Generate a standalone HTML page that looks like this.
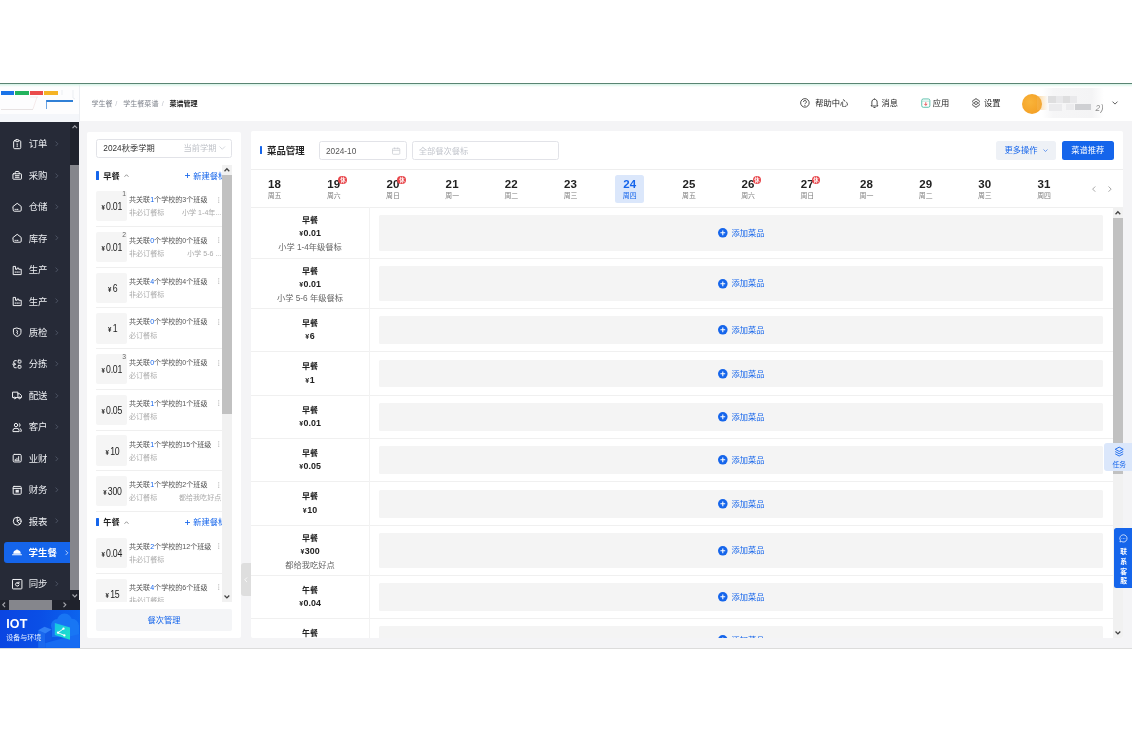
<!DOCTYPE html>
<html lang="zh-CN"><head><meta charset="utf-8"><title>菜谱管理</title>
<style>
*{box-sizing:border-box;margin:0;padding:0}
html,body{width:1132px;height:732px;overflow:hidden;background:#fff}
body{font-family:"Liberation Sans","Noto Sans CJK SC",sans-serif;color:#333;-webkit-font-smoothing:antialiased}
#app{position:relative;width:1132px;height:732px;overflow:hidden;background:#fff;opacity:.999}
#app div{position:absolute}
svg{position:absolute;overflow:visible}
.b{font-weight:700}
</style></head><body><div id="app">

<div style="position:absolute;left:0.00px;top:84.00px;width:1132.00px;height:37.20px;background:#fff;"></div>
<div style="position:absolute;left:0.00px;top:121.20px;width:1132.00px;height:526.80px;background:#f4f4f6;"></div>
<div style="position:absolute;left:0.00px;top:647.60px;width:1132.00px;height:1.00px;background:#dcdcdc;"></div>
<div style="position:absolute;left:0.00px;top:84.00px;width:79.60px;height:37.80px;background:#f4f6fa;border-right:1px solid #eceef2;"></div>
<div style="position:absolute;left:0.00px;top:85.00px;width:79.00px;height:28.50px;background:#fdfdfe;"></div>
<div style="position:absolute;left:1.20px;top:91.30px;width:12.90px;height:4.10px;background:#1a73e8;"></div>
<div style="position:absolute;left:15.00px;top:91.30px;width:14.10px;height:4.10px;background:#22b35e;"></div>
<div style="position:absolute;left:30.10px;top:91.30px;width:13.00px;height:4.10px;background:#ea4b4b;"></div>
<div style="position:absolute;left:44.00px;top:91.30px;width:14.00px;height:4.10px;background:#f5b324;"></div>
<div style="position:absolute;left:46.00px;top:100.00px;width:26.60px;height:1.70px;background:#2f7fd6;"></div>
<div style="position:absolute;left:46.00px;top:100.00px;width:1.00px;height:8.50px;background:#4a8fdc;opacity:.8;"></div>
<div style="position:absolute;left:1.00px;top:108.60px;width:32.00px;height:0.60px;background:#e7e2e2;"></div>
<svg style="left:0;top:84px" width="80" height="38"><path d="M33 25 L37 13 M30 13 L38 13" stroke="#efdede" stroke-width=".6" fill="none"/><path d="M62 6v5M73 6v8l2 1" stroke="#e3e6ee" stroke-width=".7" fill="none"/></svg>
<div style="position:absolute;left:0.00px;top:84.00px;width:1132.00px;height:2.60px;background:linear-gradient(180deg,#d4f3e6,rgba(255,255,255,0));"></div>
<div style="position:absolute;left:0.00px;top:82.90px;width:1132.00px;height:1.20px;background:#5a8473;"></div>
<div style="position:absolute;white-space:nowrap;top:96px;height:16px;line-height:16px;font-size:7.07px;color:#7f838c;left:91.40px;">学生餐</div>
<div style="position:absolute;white-space:nowrap;top:96px;height:16px;line-height:16px;font-size:7.07px;color:#c0c4cc;left:115.30px;">/</div>
<div style="position:absolute;white-space:nowrap;top:96px;height:16px;line-height:16px;font-size:7.07px;color:#7f838c;left:123.20px;">学生餐菜谱</div>
<div style="position:absolute;white-space:nowrap;top:96px;height:16px;line-height:16px;font-size:7.07px;color:#c0c4cc;left:161.80px;">/</div>
<div style="position:absolute;white-space:nowrap;top:96px;height:16px;line-height:16px;font-size:7.07px;color:#222;font-weight:700;left:169.40px;">菜谱管理</div>
<svg style="left:800.4px;top:98.3px" width="9.800" height="9.800" viewBox="0 0 20 20"><circle cx="10" cy="10" r="8.700" fill="none" stroke="#2b2b2b" stroke-width="1.700"/><path d="M7.200 8a2.900 2.900 0 1 1 4.300 2.500c-.9.600-1.400 1-1.400 2.100" fill="none" stroke="#2b2b2b" stroke-width="1.700"/><circle cx="10" cy="15.200" r="1.100" fill="#2b2b2b"/></svg>
<div style="position:absolute;white-space:nowrap;top:96px;height:16px;line-height:16px;font-size:8.25px;color:#222;left:815.20px;">帮助中心</div>
<svg style="left:870.0px;top:97.8px" width="9" height="10.800" viewBox="0 0 18 21.600"><path d="M9 2.600c-3.400 0-5.300 2.500-5.300 5.700v5L2 16h14l-1.700-2.700v-5C14.300 5.100 12.400 2.600 9 2.600z" fill="none" stroke="#2b2b2b" stroke-width="1.700" stroke-linejoin="round"/><path d="M7 19h4M9 1v1.600" stroke="#2b2b2b" stroke-width="1.700"/></svg>
<div style="position:absolute;white-space:nowrap;top:96px;height:16px;line-height:16px;font-size:8.25px;color:#222;left:881.50px;">消息</div>
<svg style="left:920.6px;top:98.2px" width="9.600" height="10" viewBox="0 0 20 21"><rect x="1.500" y="2" width="17" height="17.500" rx="3.200" fill="#fff" stroke="#3bb39b" stroke-width="1.700"/><path d="M1.500 6.600h17" stroke="#8fd6c6" stroke-width="1.400"/><path d="M10 8.800v6.400M6.900 12.400l3.100 3.100 3.100-3.100" stroke="#e5484d" stroke-width="1.900" fill="none"/></svg>
<div style="position:absolute;white-space:nowrap;top:96px;height:16px;line-height:16px;font-size:8.25px;color:#222;left:932.70px;">应用</div>
<svg style="left:971px;top:98.2px" width="10" height="10" viewBox="0 0 20 20"><path d="M8.400 1.700h3.200l1.200 2.300 2.500.100 1.600 2.800-1.300 2.100v2l1.300 2.100-1.600 2.800-2.500.100-1.200 2.300H8.400l-1.200-2.300-2.500-.100-1.600-2.800L4.400 11V9L3.100 6.900l1.600-2.800 2.500-.100z" fill="none" stroke="#2b2b2b" stroke-width="1.500" stroke-linejoin="round"/><circle cx="10" cy="10" r="3" fill="none" stroke="#2b2b2b" stroke-width="1.500"/></svg>
<div style="position:absolute;white-space:nowrap;top:96px;height:16px;line-height:16px;font-size:8.25px;color:#222;left:984.00px;">设置</div>
<div style="position:absolute;left:1021.50px;top:93.50px;width:20.00px;height:20.00px;background:radial-gradient(circle at 40% 40%,#f9b43a,#f29a1f);border-radius:50%;"></div>
<div style="position:absolute;left:1041.50px;top:88.00px;width:62.50px;height:30.00px;background:linear-gradient(90deg,rgba(255,255,255,0) 0,#f6f6f7 18%,#f4f4f5 80%,rgba(255,255,255,.6) 100%);"></div>
<div style="position:absolute;left:1037.00px;top:96.00px;width:11.00px;height:14.00px;background:linear-gradient(90deg,rgba(244,180,80,.55),rgba(246,246,247,0));"></div>
<div style="position:absolute;left:1048.40px;top:96.20px;width:7.60px;height:7.00px;background:#dededf;filter:blur(.6px);"></div>
<div style="position:absolute;left:1063.00px;top:96.20px;width:7.00px;height:7.00px;background:#dededf;filter:blur(.6px);"></div>
<div style="position:absolute;left:1056.00px;top:96.20px;width:7.00px;height:7.00px;background:#e8e8ea;filter:blur(.6px);"></div>
<div style="position:absolute;left:1070.00px;top:96.20px;width:7.00px;height:7.00px;background:#e9e9eb;filter:blur(.6px);"></div>
<div style="position:absolute;left:1066.00px;top:104.00px;width:8.00px;height:6.00px;background:#ececee;filter:blur(.6px);"></div>
<div style="position:absolute;left:1075.00px;top:104.40px;width:16.00px;height:5.80px;background:#cfd0d3;filter:blur(.6px);"></div>
<div style="position:absolute;left:1049.00px;top:104.00px;width:13.00px;height:7.00px;background:#ebebed;filter:blur(.6px);"></div>
<div style="position:absolute;white-space:nowrap;top:101px;height:16px;line-height:16px;font-size:8.25px;color:#8c8c8c;left:1095.60px;letter-spacing:.6px;font-style:italic;">2)</div>
<svg style="left:1112.2px;top:101.4px" width="6" height="4" viewBox="0 0 12 8"><path d="M1 1.200l5 5 5-5" fill="none" stroke="#444" stroke-width="1.700"/></svg>
<div style="position:absolute;left:0.00px;top:121.90px;width:79.40px;height:526.10px;background:#262a37;"></div>
<svg style="left:12px;top:138.90px" width="10.400" height="10.400" viewBox="0 0 22 22" fill="none" stroke="#f4f5f7" stroke-width="2.100" stroke-linejoin="round" stroke-linecap="round"><rect x="3.500" y="3.500" width="15" height="17" rx="2.200"/><rect x="7.800" y="1.500" width="6.400" height="4" rx="1" fill="#262a37"/><path d="M11 10v3.200"/><path d="M11 15.600v.4"/></svg>
<div style="position:absolute;white-space:nowrap;top:136px;height:16px;line-height:16px;font-size:9.43px;color:#eceef2;left:28.70px;">订单</div>
<svg style="left:55.3px;top:141.20px" width="3.500" height="5.600" viewBox="0 0 7 11"><path d="M1.200 1l4.500 4.500L1.200 10" fill="none" stroke="#5a6072" stroke-width="1.500"/></svg>
<svg style="left:12px;top:170.33px" width="10.400" height="10.400" viewBox="0 0 22 22" fill="none" stroke="#f4f5f7" stroke-width="2.100" stroke-linejoin="round" stroke-linecap="round"><rect x="2" y="8" width="18" height="11.500" rx="1"/><path d="M6.800 8V5a1.800 1.800 0 0 1 1.800-1.800h4.800A1.800 1.800 0 0 1 15.200 5v3"/><path d="M7 12h8M7 15.500h8"/></svg>
<div style="position:absolute;white-space:nowrap;top:168px;height:16px;line-height:16px;font-size:9.43px;color:#eceef2;left:28.70px;">采购</div>
<svg style="left:55.3px;top:172.63px" width="3.500" height="5.600" viewBox="0 0 7 11"><path d="M1.200 1l4.500 4.500L1.200 10" fill="none" stroke="#5a6072" stroke-width="1.500"/></svg>
<svg style="left:12px;top:201.76px" width="10.400" height="10.400" viewBox="0 0 22 22" fill="none" stroke="#f4f5f7" stroke-width="2.100" stroke-linejoin="round" stroke-linecap="round"><path d="M2.500 9.300L11 2.800l8.500 6.500v8a2.200 2.200 0 0 1-2.200 2.200H4.700a2.200 2.200 0 0 1-2.200-2.200z"/><path d="M6.300 15.600h1M10 15.600h2.600"/></svg>
<div style="position:absolute;white-space:nowrap;top:199px;height:16px;line-height:16px;font-size:9.43px;color:#eceef2;left:28.70px;">仓储</div>
<svg style="left:55.3px;top:204.06px" width="3.500" height="5.600" viewBox="0 0 7 11"><path d="M1.200 1l4.500 4.500L1.200 10" fill="none" stroke="#5a6072" stroke-width="1.500"/></svg>
<svg style="left:12px;top:233.19px" width="10.400" height="10.400" viewBox="0 0 22 22" fill="none" stroke="#f4f5f7" stroke-width="2.100" stroke-linejoin="round" stroke-linecap="round"><path d="M2.500 9.300L11 2.800l8.500 6.500v8a2.200 2.200 0 0 1-2.200 2.200H4.700a2.200 2.200 0 0 1-2.200-2.200z"/><path d="M6.300 15.600h1M10 15.600h2.600"/></svg>
<div style="position:absolute;white-space:nowrap;top:231px;height:16px;line-height:16px;font-size:9.43px;color:#eceef2;left:28.70px;">库存</div>
<svg style="left:55.3px;top:235.49px" width="3.500" height="5.600" viewBox="0 0 7 11"><path d="M1.200 1l4.500 4.500L1.200 10" fill="none" stroke="#5a6072" stroke-width="1.500"/></svg>
<svg style="left:12px;top:264.62px" width="10.400" height="10.400" viewBox="0 0 22 22" fill="none" stroke="#f4f5f7" stroke-width="2.100" stroke-linejoin="round" stroke-linecap="round"><path d="M2.500 19.500V3h5v6h3.300V6.500h3.400V9h5.300v10.500z"/><path d="M6.500 15h1.600M10.300 15h1.600M14 15h1.600"/></svg>
<div style="position:absolute;white-space:nowrap;top:262px;height:16px;line-height:16px;font-size:9.43px;color:#eceef2;left:28.70px;">生产</div>
<svg style="left:55.3px;top:266.92px" width="3.500" height="5.600" viewBox="0 0 7 11"><path d="M1.200 1l4.500 4.500L1.200 10" fill="none" stroke="#5a6072" stroke-width="1.500"/></svg>
<svg style="left:12px;top:296.05px" width="10.400" height="10.400" viewBox="0 0 22 22" fill="none" stroke="#f4f5f7" stroke-width="2.100" stroke-linejoin="round" stroke-linecap="round"><path d="M2.500 19.500V3h5v6h3.300V6.500h3.400V9h5.300v10.500z"/><path d="M6.500 15h1.600M10.300 15h1.600M14 15h1.600"/></svg>
<div style="position:absolute;white-space:nowrap;top:294px;height:16px;line-height:16px;font-size:9.43px;color:#eceef2;left:28.70px;">生产</div>
<svg style="left:55.3px;top:298.35px" width="3.500" height="5.600" viewBox="0 0 7 11"><path d="M1.200 1l4.500 4.500L1.200 10" fill="none" stroke="#5a6072" stroke-width="1.500"/></svg>
<svg style="left:12px;top:327.48px" width="10.400" height="10.400" viewBox="0 0 22 22" fill="none" stroke="#f4f5f7" stroke-width="2.100" stroke-linejoin="round" stroke-linecap="round"><path d="M11 2.300l8 2.500v6.400c0 4.600-3.600 7.300-8 8.800-4.400-1.500-8-4.200-8-8.800V4.800z"/><path d="M9.800 7.200l2.800 2.100-2.800 2.100 2.800 2.100-1.600 1.400"/></svg>
<div style="position:absolute;white-space:nowrap;top:325px;height:16px;line-height:16px;font-size:9.43px;color:#eceef2;left:28.70px;">质检</div>
<svg style="left:55.3px;top:329.78px" width="3.500" height="5.600" viewBox="0 0 7 11"><path d="M1.200 1l4.500 4.500L1.200 10" fill="none" stroke="#5a6072" stroke-width="1.500"/></svg>
<svg style="left:12px;top:358.91px" width="10.400" height="10.400" viewBox="0 0 22 22" fill="none" stroke="#f4f5f7" stroke-width="2.100" stroke-linejoin="round" stroke-linecap="round"><path d="M9 3.500H6.200a2.400 2.400 0 0 0-2.400 2.400V9"/><path d="M9 18.500H6.200a2.400 2.400 0 0 1-2.400-2.400V13"/><path d="M1.500 11h5.500M5 8.700L7.300 11 5 13.300"/><rect x="13" y="2.500" width="6" height="6" rx="1.200"/><rect x="13" y="13.500" width="6" height="6" rx="1.200"/></svg>
<div style="position:absolute;white-space:nowrap;top:356px;height:16px;line-height:16px;font-size:9.43px;color:#eceef2;left:28.70px;">分拣</div>
<svg style="left:55.3px;top:361.21px" width="3.500" height="5.600" viewBox="0 0 7 11"><path d="M1.200 1l4.500 4.500L1.200 10" fill="none" stroke="#5a6072" stroke-width="1.500"/></svg>
<svg style="left:12px;top:390.34px" width="10.400" height="10.400" viewBox="0 0 22 22" fill="none" stroke="#f4f5f7" stroke-width="2.100" stroke-linejoin="round" stroke-linecap="round"><path d="M2 4.500h10.500v11.500H2z"/><path d="M12.500 8h4l3.500 3.800V16h-7.500"/><circle cx="6" cy="16.800" r="1.800" fill="#262a37"/><circle cx="15.800" cy="16.800" r="1.800" fill="#262a37"/></svg>
<div style="position:absolute;white-space:nowrap;top:388px;height:16px;line-height:16px;font-size:9.43px;color:#eceef2;left:28.70px;">配送</div>
<svg style="left:55.3px;top:392.64px" width="3.500" height="5.600" viewBox="0 0 7 11"><path d="M1.200 1l4.500 4.500L1.200 10" fill="none" stroke="#5a6072" stroke-width="1.500"/></svg>
<svg style="left:12px;top:421.77px" width="10.400" height="10.400" viewBox="0 0 22 22" fill="none" stroke="#f4f5f7" stroke-width="2.100" stroke-linejoin="round" stroke-linecap="round"><circle cx="8.500" cy="6.500" r="3.600"/><path d="M2 19.500V18a4.500 4.500 0 0 1 4.500-4.500h4A4.500 4.500 0 0 1 15 18v1.500z"/><path d="M15.300 3.300a3.600 3.600 0 0 1 0 6.400M18 19.500h2V18a4.500 4.500 0 0 0-2.800-4.100"/></svg>
<div style="position:absolute;white-space:nowrap;top:419px;height:16px;line-height:16px;font-size:9.43px;color:#eceef2;left:28.70px;">客户</div>
<svg style="left:55.3px;top:424.07px" width="3.500" height="5.600" viewBox="0 0 7 11"><path d="M1.200 1l4.500 4.500L1.200 10" fill="none" stroke="#5a6072" stroke-width="1.500"/></svg>
<svg style="left:12px;top:453.20px" width="10.400" height="10.400" viewBox="0 0 22 22" fill="none" stroke="#f4f5f7" stroke-width="2.100" stroke-linejoin="round" stroke-linecap="round"><rect x="2.500" y="3" width="17" height="16" rx="2.500"/><path d="M7 15.500v-2M10.500 15.500v-4.500M14 15.500V7.500" stroke-width="2"/><path d="M6 15.800h9.500" stroke-width="1.200"/></svg>
<div style="position:absolute;white-space:nowrap;top:451px;height:16px;line-height:16px;font-size:9.43px;color:#eceef2;left:28.70px;">业财</div>
<svg style="left:55.3px;top:455.50px" width="3.500" height="5.600" viewBox="0 0 7 11"><path d="M1.200 1l4.500 4.500L1.200 10" fill="none" stroke="#5a6072" stroke-width="1.500"/></svg>
<svg style="left:12px;top:484.63px" width="10.400" height="10.400" viewBox="0 0 22 22" fill="none" stroke="#f4f5f7" stroke-width="2.100" stroke-linejoin="round" stroke-linecap="round"><rect x="2.500" y="3" width="17" height="16.500" rx="1.800"/><path d="M2.500 7.200h17"/><rect x="7.500" y="10.200" width="7" height="5.800" fill="#e9eaee" stroke="none"/></svg>
<div style="position:absolute;white-space:nowrap;top:482px;height:16px;line-height:16px;font-size:9.43px;color:#eceef2;left:28.70px;">财务</div>
<svg style="left:55.3px;top:486.93px" width="3.500" height="5.600" viewBox="0 0 7 11"><path d="M1.200 1l4.500 4.500L1.200 10" fill="none" stroke="#5a6072" stroke-width="1.500"/></svg>
<svg style="left:12px;top:516.06px" width="10.400" height="10.400" viewBox="0 0 22 22" fill="none" stroke="#f4f5f7" stroke-width="2.100" stroke-linejoin="round" stroke-linecap="round"><circle cx="11" cy="11" r="8.300"/><path d="M11 2.700V11l5 5.500M11 11l6.500-3.800"/></svg>
<div style="position:absolute;white-space:nowrap;top:514px;height:16px;line-height:16px;font-size:9.43px;color:#eceef2;left:28.70px;">报表</div>
<svg style="left:55.3px;top:518.36px" width="3.500" height="5.600" viewBox="0 0 7 11"><path d="M1.200 1l4.500 4.500L1.200 10" fill="none" stroke="#5a6072" stroke-width="1.500"/></svg>
<div style="position:absolute;left:4.00px;top:542.39px;width:75.00px;height:20.40px;background:#1565eb;border-radius:3px 0 0 3px;"></div>
<svg style="left:12.2px;top:549.19px" width="10" height="6.500" viewBox="0 0 20 13"><path d="M2.500 9.300a7.500 7.500 0 0 1 15 0z" fill="#fff"/><circle cx="10" cy="1.600" r="1.300" fill="#fff"/><rect x="0" y="10.300" width="20" height="2.400" rx="1.200" fill="#fff"/></svg>
<div style="position:absolute;white-space:nowrap;top:545px;height:16px;line-height:16px;font-size:9.43px;color:#fff;font-weight:700;left:28.60px;">学生餐</div>
<svg style="left:64.6px;top:549.79px" width="3.500" height="5.600" viewBox="0 0 7 11"><path d="M1.200 1l4.500 4.500L1.200 10" fill="none" stroke="#e6efff" stroke-width="1.500"/></svg>
<svg style="left:12px;top:578.92px" width="10.400" height="10.400" viewBox="0 0 22 22" fill="none" stroke="#f4f5f7" stroke-width="2.100" stroke-linejoin="round" stroke-linecap="round"><rect x="1" y="1" width="20" height="20" rx="1.500"/><path d="M14.300 9a3.800 3.800 0 1 0 .6 3.600"/><path d="M14.800 6.300v3h-3"/></svg>
<div style="position:absolute;white-space:nowrap;top:576px;height:16px;line-height:16px;font-size:9.43px;color:#eceef2;left:28.70px;">同步</div>
<svg style="left:55.3px;top:581.22px" width="3.500" height="5.600" viewBox="0 0 7 11"><path d="M1.200 1l4.500 4.500L1.200 10" fill="none" stroke="#5a6072" stroke-width="1.500"/></svg>
<div style="position:absolute;left:69.60px;top:121.90px;width:9.80px;height:478.50px;background:#1f222c;"></div>
<div style="position:absolute;left:69.60px;top:165.20px;width:9.80px;height:424.80px;background:#85868c;"></div>
<svg style="left:71.7px;top:125px" width="5.600" height="3.600" viewBox="0 0 11 7"><path d="M1 6l4.500-4.500L10 6" fill="none" stroke="#a2a4ab" stroke-width="2.300"/></svg>
<svg style="left:71.7px;top:593.5px" width="5.600" height="3.600" viewBox="0 0 11 7"><path d="M1 1l4.500 4.500L10 1" fill="none" stroke="#a2a4ab" stroke-width="2.300"/></svg>
<div style="position:absolute;left:0.00px;top:600.00px;width:79.50px;height:9.90px;background:#1f222c;"></div>
<div style="position:absolute;left:9.10px;top:600.00px;width:43.00px;height:9.90px;background:#85868c;"></div>
<svg style="left:2.3px;top:602.2px" width="3.600" height="5.600" viewBox="0 0 7 11"><path d="M6 1L1.500 5.500 6 10" fill="none" stroke="#a5a7ad" stroke-width="2.200"/></svg>
<svg style="left:63px;top:602.2px" width="3.600" height="5.600" viewBox="0 0 7 11"><path d="M1 1l4.500 4.500L1 10" fill="none" stroke="#a5a7ad" stroke-width="2.200"/></svg>
<div style="position:absolute;left:0.00px;top:609.90px;width:79.50px;height:37.80px;background:linear-gradient(95deg,#0a45e2 0%,#0a4fe6 50%,#0c66ee 100%);overflow:hidden;"><svg style="left:0;top:0" width="79.500" height="37.800" viewBox="0 0 79.500 37.800"><defs><linearGradient id="cy" x1="0" y1="0" x2="1" y2="1"><stop offset="0" stop-color="#16c4e6"/><stop offset="1" stop-color="#1fe3c6"/></linearGradient></defs><g fill="#1b7af6" opacity=".85"><circle cx="57.500" cy="15.500" r="6.500"/><circle cx="64.500" cy="11" r="7.500"/><circle cx="72" cy="15.500" r="6.800"/><rect x="52" y="15" width="27" height="12"/></g><path d="M45.300 33l34.200-9v13.800H45.300z" fill="#176cf2"/><path d="M38.200 20.300l7.100 3.200v14.300h-7.100z" fill="#1a68ee"/><path d="M45.300 23.500l6.400-4V30l-6.400 3z" fill="#1159e6"/><path d="M38.200 20.300l6.300-3.600 7.200 2.800-6.400 4z" fill="#2f80f7"/><path d="M54.800 13.100L70 17.500v12.300l-15.200-4.700z" fill="url(#cy)"/><path d="M63.400 18.800L58 22.700l6.300 2.700" stroke="#fff" stroke-width=".9" fill="none"/><circle cx="63.500" cy="18.700" r="1.150" fill="#fff"/><circle cx="58" cy="22.700" r="1.150" fill="#fff"/><circle cx="64.400" cy="25.400" r="1.150" fill="#fff"/></svg></div>
<div style="position:absolute;white-space:nowrap;top:616px;height:16px;line-height:16px;font-size:12.5px;color:#fff;font-weight:700;left:6.30px;letter-spacing:.1px;">IOT</div>
<div style="position:absolute;white-space:nowrap;top:630px;height:16px;line-height:16px;font-size:7px;color:#e6f0ff;left:6.30px;">设备与环境</div>
<div style="position:absolute;left:87.00px;top:131.60px;width:153.80px;height:506.00px;background:#fff;border-radius:2px;"></div>
<div style="position:absolute;left:96.40px;top:138.60px;width:135.20px;height:19.00px;background:#fff;border:1px solid #e2e3e8;border-radius:2.5px;"></div>
<div style="position:absolute;white-space:nowrap;top:141px;height:16px;line-height:16px;font-size:8.25px;color:#333;left:103.30px;">2024秋季学期</div>
<div style="position:absolute;white-space:nowrap;top:141px;height:16px;line-height:16px;font-size:8.25px;color:#bfc2c8;left:16.60px;width:200px;text-align:right;">当前学期</div>
<svg style="left:218.8px;top:146.2px" width="6.500" height="4" viewBox="0 0 13 8"><path d="M1 1l5.500 5.500L12 1" fill="none" stroke="#c0c4cc" stroke-width="1.300"/></svg>
<div style="position:absolute;left:96.40px;top:165.00px;width:135.20px;height:436.50px;background:transparent;overflow:hidden;"><div style="position:absolute;left:0.00px;top:6.20px;width:2.40px;height:8.50px;background:#1565eb;border-radius:.6px;"></div><div style="position:absolute;white-space:nowrap;top:4px;height:16px;line-height:16px;font-size:8.25px;color:#222;font-weight:700;left:6.90px;">早餐</div><svg style="left:27.89999999999999px;top:8.90px" width="5" height="3.200" viewBox="0 0 10 6.400"><path d="M1 5.500l4-4 4 4" fill="none" stroke="#555" stroke-width="1.300"/></svg><svg style="left:88.40px;top:8.00px" width="5" height="5" viewBox="0 0 10 10"><path d="M5 0v10M0 5h10" stroke="#1565eb" stroke-width="1.700"/></svg><div style="position:absolute;white-space:nowrap;top:4px;height:16px;line-height:16px;font-size:8.25px;color:#1565eb;left:96.80px;">新建餐标</div><div style="position:absolute;left:0.00px;top:26.10px;width:30.20px;height:30.30px;background:#f5f5f5;border-radius:2px;"></div><div style="position:absolute;white-space:nowrap;top:33px;height:16px;line-height:16px;font-size:10.8px;color:#222;left:-4.20px;width:40px;text-align:center;"><span style="display:inline-block;transform:scaleX(.81);letter-spacing:-.3px"><span style="font-size:7.500px;margin-right:1.500px;letter-spacing:0;font-weight:700">¥</span>0.01</span></div><div style="position:absolute;white-space:nowrap;top:21px;height:16px;line-height:16px;font-size:6.8px;color:#666;left:22.80px;width:10px;text-align:center;">1</div><div style="position:absolute;white-space:nowrap;top:27px;height:16px;line-height:16px;font-size:7.07px;color:#555;left:32.60px;">共关联<span style="color:#1565eb">1</span>个学校的3个班级</div><div style="position:absolute;white-space:nowrap;top:40px;height:16px;line-height:16px;font-size:7.07px;color:#aaa;left:32.60px;">非必订餐标</div><div style="position:absolute;white-space:nowrap;top:40px;height:16px;line-height:16px;font-size:7.07px;color:#aaa;left:64.90px;width:60px;text-align:right;">小学 1-4年...</div><svg style="left:121.19999999999999px;top:31.70px" width="1.400" height="6"><circle cx=".7" cy=".8" r=".6" fill="#aaa"/><circle cx=".7" cy="3" r=".6" fill="#aaa"/><circle cx=".7" cy="5.200" r=".6" fill="#aaa"/></svg><div style="position:absolute;left:0.00px;top:61.00px;width:125.60px;height:0.60px;background:#efefef;"></div><div style="position:absolute;left:0.00px;top:66.82px;width:30.20px;height:30.30px;background:#f5f5f5;border-radius:2px;"></div><div style="position:absolute;white-space:nowrap;top:74px;height:16px;line-height:16px;font-size:10.8px;color:#222;left:-4.20px;width:40px;text-align:center;"><span style="display:inline-block;transform:scaleX(.81);letter-spacing:-.3px"><span style="font-size:7.500px;margin-right:1.500px;letter-spacing:0;font-weight:700">¥</span>0.01</span></div><div style="position:absolute;white-space:nowrap;top:62px;height:16px;line-height:16px;font-size:6.8px;color:#666;left:22.80px;width:10px;text-align:center;">2</div><div style="position:absolute;white-space:nowrap;top:68px;height:16px;line-height:16px;font-size:7.07px;color:#555;left:32.60px;">共关联<span style="color:#1565eb">0</span>个学校的0个班级</div><div style="position:absolute;white-space:nowrap;top:81px;height:16px;line-height:16px;font-size:7.07px;color:#aaa;left:32.60px;">非必订餐标</div><div style="position:absolute;white-space:nowrap;top:81px;height:16px;line-height:16px;font-size:7.07px;color:#aaa;left:64.90px;width:60px;text-align:right;">小学 5-6 ...</div><svg style="left:121.19999999999999px;top:72.42px" width="1.400" height="6"><circle cx=".7" cy=".8" r=".6" fill="#aaa"/><circle cx=".7" cy="3" r=".6" fill="#aaa"/><circle cx=".7" cy="5.200" r=".6" fill="#aaa"/></svg><div style="position:absolute;left:0.00px;top:101.72px;width:125.60px;height:0.60px;background:#efefef;"></div><div style="position:absolute;left:0.00px;top:107.54px;width:30.20px;height:30.30px;background:#f5f5f5;border-radius:2px;"></div><div style="position:absolute;white-space:nowrap;top:115px;height:16px;line-height:16px;font-size:10.8px;color:#222;left:-4.20px;width:40px;text-align:center;"><span style="display:inline-block;transform:scaleX(.81);letter-spacing:-.3px"><span style="font-size:7.500px;margin-right:1.500px;letter-spacing:0;font-weight:700">¥</span>6</span></div><div style="position:absolute;white-space:nowrap;top:109px;height:16px;line-height:16px;font-size:7.07px;color:#555;left:32.60px;">共关联<span style="color:#1565eb">4</span>个学校的4个班级</div><div style="position:absolute;white-space:nowrap;top:122px;height:16px;line-height:16px;font-size:7.07px;color:#aaa;left:32.60px;">非必订餐标</div><svg style="left:121.19999999999999px;top:113.14px" width="1.400" height="6"><circle cx=".7" cy=".8" r=".6" fill="#aaa"/><circle cx=".7" cy="3" r=".6" fill="#aaa"/><circle cx=".7" cy="5.200" r=".6" fill="#aaa"/></svg><div style="position:absolute;left:0.00px;top:142.44px;width:125.60px;height:0.60px;background:#efefef;"></div><div style="position:absolute;left:0.00px;top:148.26px;width:30.20px;height:30.30px;background:#f5f5f5;border-radius:2px;"></div><div style="position:absolute;white-space:nowrap;top:155px;height:16px;line-height:16px;font-size:10.8px;color:#222;left:-4.20px;width:40px;text-align:center;"><span style="display:inline-block;transform:scaleX(.81);letter-spacing:-.3px"><span style="font-size:7.500px;margin-right:1.500px;letter-spacing:0;font-weight:700">¥</span>1</span></div><div style="position:absolute;white-space:nowrap;top:149px;height:16px;line-height:16px;font-size:7.07px;color:#555;left:32.60px;">共关联<span style="color:#1565eb">0</span>个学校的0个班级</div><div style="position:absolute;white-space:nowrap;top:163px;height:16px;line-height:16px;font-size:7.07px;color:#aaa;left:32.60px;">必订餐标</div><svg style="left:121.19999999999999px;top:153.86px" width="1.400" height="6"><circle cx=".7" cy=".8" r=".6" fill="#aaa"/><circle cx=".7" cy="3" r=".6" fill="#aaa"/><circle cx=".7" cy="5.200" r=".6" fill="#aaa"/></svg><div style="position:absolute;left:0.00px;top:183.16px;width:125.60px;height:0.60px;background:#efefef;"></div><div style="position:absolute;left:0.00px;top:188.98px;width:30.20px;height:30.30px;background:#f5f5f5;border-radius:2px;"></div><div style="position:absolute;white-space:nowrap;top:196px;height:16px;line-height:16px;font-size:10.8px;color:#222;left:-4.20px;width:40px;text-align:center;"><span style="display:inline-block;transform:scaleX(.81);letter-spacing:-.3px"><span style="font-size:7.500px;margin-right:1.500px;letter-spacing:0;font-weight:700">¥</span>0.01</span></div><div style="position:absolute;white-space:nowrap;top:184px;height:16px;line-height:16px;font-size:6.8px;color:#666;left:22.80px;width:10px;text-align:center;">3</div><div style="position:absolute;white-space:nowrap;top:190px;height:16px;line-height:16px;font-size:7.07px;color:#555;left:32.60px;">共关联<span style="color:#1565eb">0</span>个学校的0个班级</div><div style="position:absolute;white-space:nowrap;top:203px;height:16px;line-height:16px;font-size:7.07px;color:#aaa;left:32.60px;">必订餐标</div><svg style="left:121.19999999999999px;top:194.58px" width="1.400" height="6"><circle cx=".7" cy=".8" r=".6" fill="#aaa"/><circle cx=".7" cy="3" r=".6" fill="#aaa"/><circle cx=".7" cy="5.200" r=".6" fill="#aaa"/></svg><div style="position:absolute;left:0.00px;top:223.88px;width:125.60px;height:0.60px;background:#efefef;"></div><div style="position:absolute;left:0.00px;top:229.70px;width:30.20px;height:30.30px;background:#f5f5f5;border-radius:2px;"></div><div style="position:absolute;white-space:nowrap;top:237px;height:16px;line-height:16px;font-size:10.8px;color:#222;left:-4.20px;width:40px;text-align:center;"><span style="display:inline-block;transform:scaleX(.81);letter-spacing:-.3px"><span style="font-size:7.500px;margin-right:1.500px;letter-spacing:0;font-weight:700">¥</span>0.05</span></div><div style="position:absolute;white-space:nowrap;top:231px;height:16px;line-height:16px;font-size:7.07px;color:#555;left:32.60px;">共关联<span style="color:#1565eb">1</span>个学校的1个班级</div><div style="position:absolute;white-space:nowrap;top:244px;height:16px;line-height:16px;font-size:7.07px;color:#aaa;left:32.60px;">必订餐标</div><svg style="left:121.19999999999999px;top:235.30px" width="1.400" height="6"><circle cx=".7" cy=".8" r=".6" fill="#aaa"/><circle cx=".7" cy="3" r=".6" fill="#aaa"/><circle cx=".7" cy="5.200" r=".6" fill="#aaa"/></svg><div style="position:absolute;left:0.00px;top:264.60px;width:125.60px;height:0.60px;background:#efefef;"></div><div style="position:absolute;left:0.00px;top:270.42px;width:30.20px;height:30.30px;background:#f5f5f5;border-radius:2px;"></div><div style="position:absolute;white-space:nowrap;top:278px;height:16px;line-height:16px;font-size:10.8px;color:#222;left:-4.20px;width:40px;text-align:center;"><span style="display:inline-block;transform:scaleX(.81);letter-spacing:-.3px"><span style="font-size:7.500px;margin-right:1.500px;letter-spacing:0;font-weight:700">¥</span>10</span></div><div style="position:absolute;white-space:nowrap;top:272px;height:16px;line-height:16px;font-size:7.07px;color:#555;left:32.60px;">共关联<span style="color:#1565eb">1</span>个学校的15个班级</div><div style="position:absolute;white-space:nowrap;top:285px;height:16px;line-height:16px;font-size:7.07px;color:#aaa;left:32.60px;">必订餐标</div><svg style="left:121.19999999999999px;top:276.02px" width="1.400" height="6"><circle cx=".7" cy=".8" r=".6" fill="#aaa"/><circle cx=".7" cy="3" r=".6" fill="#aaa"/><circle cx=".7" cy="5.200" r=".6" fill="#aaa"/></svg><div style="position:absolute;left:0.00px;top:305.32px;width:125.60px;height:0.60px;background:#efefef;"></div><div style="position:absolute;left:0.00px;top:311.14px;width:30.20px;height:30.30px;background:#f5f5f5;border-radius:2px;"></div><div style="position:absolute;white-space:nowrap;top:318px;height:16px;line-height:16px;font-size:10.8px;color:#222;left:-4.20px;width:40px;text-align:center;"><span style="display:inline-block;transform:scaleX(.81);letter-spacing:-.3px"><span style="font-size:7.500px;margin-right:1.500px;letter-spacing:0;font-weight:700">¥</span>300</span></div><div style="position:absolute;white-space:nowrap;top:312px;height:16px;line-height:16px;font-size:7.07px;color:#555;left:32.60px;">共关联<span style="color:#1565eb">1</span>个学校的2个班级</div><div style="position:absolute;white-space:nowrap;top:325px;height:16px;line-height:16px;font-size:7.07px;color:#aaa;left:32.60px;">必订餐标</div><div style="position:absolute;white-space:nowrap;top:325px;height:16px;line-height:16px;font-size:7.07px;color:#aaa;left:64.90px;width:60px;text-align:right;">都给我吃好点</div><svg style="left:121.19999999999999px;top:316.74px" width="1.400" height="6"><circle cx=".7" cy=".8" r=".6" fill="#aaa"/><circle cx=".7" cy="3" r=".6" fill="#aaa"/><circle cx=".7" cy="5.200" r=".6" fill="#aaa"/></svg><div style="position:absolute;left:0.00px;top:346.04px;width:125.60px;height:0.60px;background:#efefef;"></div><div style="position:absolute;left:0.00px;top:352.90px;width:2.40px;height:8.50px;background:#1565eb;border-radius:.6px;"></div><div style="position:absolute;white-space:nowrap;top:350px;height:16px;line-height:16px;font-size:8.25px;color:#222;font-weight:700;left:6.90px;">午餐</div><svg style="left:27.89999999999999px;top:355.60px" width="5" height="3.200" viewBox="0 0 10 6.400"><path d="M1 5.500l4-4 4 4" fill="none" stroke="#555" stroke-width="1.300"/></svg><svg style="left:88.40px;top:354.70px" width="5" height="5" viewBox="0 0 10 10"><path d="M5 0v10M0 5h10" stroke="#1565eb" stroke-width="1.700"/></svg><div style="position:absolute;white-space:nowrap;top:350px;height:16px;line-height:16px;font-size:8.25px;color:#1565eb;left:96.80px;">新建餐标</div><div style="position:absolute;left:0.00px;top:372.80px;width:30.20px;height:30.30px;background:#f5f5f5;border-radius:2px;"></div><div style="position:absolute;white-space:nowrap;top:380px;height:16px;line-height:16px;font-size:10.8px;color:#222;left:-4.20px;width:40px;text-align:center;"><span style="display:inline-block;transform:scaleX(.81);letter-spacing:-.3px"><span style="font-size:7.500px;margin-right:1.500px;letter-spacing:0;font-weight:700">¥</span>0.04</span></div><div style="position:absolute;white-space:nowrap;top:374px;height:16px;line-height:16px;font-size:7.07px;color:#555;left:32.60px;">共关联<span style="color:#1565eb">2</span>个学校的12个班级</div><div style="position:absolute;white-space:nowrap;top:387px;height:16px;line-height:16px;font-size:7.07px;color:#aaa;left:32.60px;">非必订餐标</div><svg style="left:121.19999999999999px;top:378.40px" width="1.400" height="6"><circle cx=".7" cy=".8" r=".6" fill="#aaa"/><circle cx=".7" cy="3" r=".6" fill="#aaa"/><circle cx=".7" cy="5.200" r=".6" fill="#aaa"/></svg><div style="position:absolute;left:0.00px;top:407.70px;width:125.60px;height:0.60px;background:#efefef;"></div><div style="position:absolute;left:0.00px;top:413.52px;width:30.20px;height:30.30px;background:#f5f5f5;border-radius:2px;"></div><div style="position:absolute;white-space:nowrap;top:421px;height:16px;line-height:16px;font-size:10.8px;color:#222;left:-4.20px;width:40px;text-align:center;"><span style="display:inline-block;transform:scaleX(.81);letter-spacing:-.3px"><span style="font-size:7.500px;margin-right:1.500px;letter-spacing:0;font-weight:700">¥</span>15</span></div><div style="position:absolute;white-space:nowrap;top:415px;height:16px;line-height:16px;font-size:7.07px;color:#555;left:32.60px;">共关联<span style="color:#1565eb">4</span>个学校的6个班级</div><div style="position:absolute;white-space:nowrap;top:428px;height:16px;line-height:16px;font-size:7.07px;color:#aaa;left:32.60px;">非必订餐标</div><svg style="left:121.19999999999999px;top:419.12px" width="1.400" height="6"><circle cx=".7" cy=".8" r=".6" fill="#aaa"/><circle cx=".7" cy="3" r=".6" fill="#aaa"/><circle cx=".7" cy="5.200" r=".6" fill="#aaa"/></svg><div style="position:absolute;left:0.00px;top:448.42px;width:125.60px;height:0.60px;background:#efefef;"></div><div style="position:absolute;left:125.60px;top:0.00px;width:9.60px;height:436.50px;background:#f1f1f1;"></div><div style="position:absolute;left:125.60px;top:9.60px;width:9.60px;height:239.60px;background:#c1c1c1;"></div><svg style="left:127.69999999999999px;top:3.3000000000000114px" width="5.800" height="3.700" viewBox="0 0 11 7"><path d="M1 6l4.500-4.500L10 6" fill="none" stroke="#444" stroke-width="2.500"/></svg><svg style="left:127.69999999999999px;top:430px" width="5.800" height="3.700" viewBox="0 0 11 7"><path d="M1 1l4.500 4.500L10 1" fill="none" stroke="#444" stroke-width="2.500"/></svg></div>
<div style="position:absolute;left:96.40px;top:609.00px;width:135.40px;height:21.80px;background:#f4f5f7;border-radius:2px;"></div>
<div style="position:absolute;white-space:nowrap;top:613px;height:16px;line-height:16px;font-size:8.25px;color:#1565eb;left:64.10px;width:200px;text-align:center;">餐次管理</div>
<div style="position:absolute;left:241.20px;top:563.00px;width:9.50px;height:32.80px;background:#dedede;border-radius:3px 0 0 3px;"></div>
<svg style="left:243.6px;top:576.5px" width="3.600" height="5.600" viewBox="0 0 7 11"><path d="M6 1L1.500 5.500 6 10" fill="none" stroke="#fff" stroke-width="1.500"/></svg>
<div style="position:absolute;left:250.60px;top:131.30px;width:872.10px;height:506.70px;background:#fff;border-radius:2px;"></div>
<div style="position:absolute;left:260.20px;top:146.00px;width:2.30px;height:7.80px;background:#1565eb;border-radius:.6px;"></div>
<div style="position:absolute;white-space:nowrap;top:143px;height:16px;line-height:16px;font-size:9.43px;color:#222;font-weight:700;left:267.00px;">菜品管理</div>
<div style="position:absolute;left:318.50px;top:141.20px;width:88.30px;height:18.40px;background:#fff;border:1px solid #e2e3e8;border-radius:2.500px;"></div>
<div style="position:absolute;white-space:nowrap;top:144px;height:16px;line-height:16px;font-size:8.25px;color:#555;left:326.00px;">2024-10</div>
<svg style="left:392px;top:146.6px" width="8.300" height="7.800" viewBox="0 0 16 15"><rect x="1" y="2.600" width="14" height="11.400" rx="1.500" fill="none" stroke="#c4c6cc" stroke-width="1.300"/><path d="M1 6.400h14M5 .8v3.400M11 .8v3.400" stroke="#c4c6cc" stroke-width="1.300"/></svg>
<div style="position:absolute;left:412.30px;top:141.20px;width:147.00px;height:18.40px;background:#fff;border:1px solid #e2e3e8;border-radius:2.500px;"></div>
<div style="position:absolute;white-space:nowrap;top:144px;height:16px;line-height:16px;font-size:8.25px;color:#c3c6cd;left:418.70px;">全部餐次餐标</div>
<div style="position:absolute;left:995.80px;top:141.20px;width:60.70px;height:18.40px;background:#eef1f6;border-radius:2.500px;"></div>
<div style="position:absolute;white-space:nowrap;top:143px;height:16px;line-height:16px;font-size:8.25px;color:#1565eb;left:1004.40px;">更多操作</div>
<svg style="left:1043.3px;top:149px" width="5" height="3.200" viewBox="0 0 10 6.400"><path d="M1 1l4 4 4-4" fill="none" stroke="#1565eb" stroke-width="1.200"/></svg>
<div style="position:absolute;left:1062.00px;top:141.20px;width:51.50px;height:18.40px;background:#1565eb;border-radius:2.500px;"></div>
<div style="position:absolute;white-space:nowrap;top:143px;height:16px;line-height:16px;font-size:8.25px;color:#fff;left:987.70px;width:200px;text-align:center;">菜谱推荐</div>
<div style="position:absolute;left:250.60px;top:169.00px;width:872.10px;height:0.70px;background:#eeeeee;"></div>
<div style="position:absolute;white-space:nowrap;top:176px;height:16px;line-height:16px;font-size:11.5px;color:#222;font-weight:700;left:254.60px;width:40px;text-align:center;letter-spacing:.15px;">18</div>
<div style="position:absolute;white-space:nowrap;top:188px;height:16px;line-height:16px;font-size:6.9px;color:#808080;left:254.60px;width:40px;text-align:center;">周五</div>
<div style="position:absolute;white-space:nowrap;top:176px;height:16px;line-height:16px;font-size:11.5px;color:#222;font-weight:700;left:313.79px;width:40px;text-align:center;letter-spacing:.15px;">19</div>
<div style="position:absolute;white-space:nowrap;top:188px;height:16px;line-height:16px;font-size:6.9px;color:#808080;left:313.79px;width:40px;text-align:center;">周六</div>
<div style="position:absolute;left:338.29px;top:175.60px;width:8.50px;height:8.50px;background:#e8474c;border-radius:50%;"></div>
<div style="position:absolute;white-space:nowrap;top:172px;height:16px;line-height:16px;font-size:6px;color:#fff;font-weight:700;left:336.54px;width:12px;text-align:center;transform:scale(.9);">休</div>
<div style="position:absolute;white-space:nowrap;top:176px;height:16px;line-height:16px;font-size:11.5px;color:#222;font-weight:700;left:372.98px;width:40px;text-align:center;letter-spacing:.15px;">20</div>
<div style="position:absolute;white-space:nowrap;top:188px;height:16px;line-height:16px;font-size:6.9px;color:#808080;left:372.98px;width:40px;text-align:center;">周日</div>
<div style="position:absolute;left:397.48px;top:175.60px;width:8.50px;height:8.50px;background:#e8474c;border-radius:50%;"></div>
<div style="position:absolute;white-space:nowrap;top:172px;height:16px;line-height:16px;font-size:6px;color:#fff;font-weight:700;left:395.73px;width:12px;text-align:center;transform:scale(.9);">休</div>
<div style="position:absolute;white-space:nowrap;top:176px;height:16px;line-height:16px;font-size:11.5px;color:#222;font-weight:700;left:432.17px;width:40px;text-align:center;letter-spacing:.15px;">21</div>
<div style="position:absolute;white-space:nowrap;top:188px;height:16px;line-height:16px;font-size:6.9px;color:#808080;left:432.17px;width:40px;text-align:center;">周一</div>
<div style="position:absolute;white-space:nowrap;top:176px;height:16px;line-height:16px;font-size:11.5px;color:#222;font-weight:700;left:491.36px;width:40px;text-align:center;letter-spacing:.15px;">22</div>
<div style="position:absolute;white-space:nowrap;top:188px;height:16px;line-height:16px;font-size:6.9px;color:#808080;left:491.36px;width:40px;text-align:center;">周二</div>
<div style="position:absolute;white-space:nowrap;top:176px;height:16px;line-height:16px;font-size:11.5px;color:#222;font-weight:700;left:550.55px;width:40px;text-align:center;letter-spacing:.15px;">23</div>
<div style="position:absolute;white-space:nowrap;top:188px;height:16px;line-height:16px;font-size:6.9px;color:#808080;left:550.55px;width:40px;text-align:center;">周三</div>
<div style="position:absolute;left:615.44px;top:174.50px;width:28.60px;height:28.60px;background:#dbe7fb;border-radius:2.500px;"></div>
<div style="position:absolute;white-space:nowrap;top:176px;height:16px;line-height:16px;font-size:11.5px;color:#1565eb;font-weight:700;left:609.74px;width:40px;text-align:center;letter-spacing:.15px;">24</div>
<div style="position:absolute;white-space:nowrap;top:188px;height:16px;line-height:16px;font-size:6.9px;color:#1565eb;left:609.74px;width:40px;text-align:center;">周四</div>
<div style="position:absolute;white-space:nowrap;top:176px;height:16px;line-height:16px;font-size:11.5px;color:#222;font-weight:700;left:668.93px;width:40px;text-align:center;letter-spacing:.15px;">25</div>
<div style="position:absolute;white-space:nowrap;top:188px;height:16px;line-height:16px;font-size:6.9px;color:#808080;left:668.93px;width:40px;text-align:center;">周五</div>
<div style="position:absolute;white-space:nowrap;top:176px;height:16px;line-height:16px;font-size:11.5px;color:#222;font-weight:700;left:728.12px;width:40px;text-align:center;letter-spacing:.15px;">26</div>
<div style="position:absolute;white-space:nowrap;top:188px;height:16px;line-height:16px;font-size:6.9px;color:#808080;left:728.12px;width:40px;text-align:center;">周六</div>
<div style="position:absolute;left:752.62px;top:175.60px;width:8.50px;height:8.50px;background:#e8474c;border-radius:50%;"></div>
<div style="position:absolute;white-space:nowrap;top:172px;height:16px;line-height:16px;font-size:6px;color:#fff;font-weight:700;left:750.87px;width:12px;text-align:center;transform:scale(.9);">休</div>
<div style="position:absolute;white-space:nowrap;top:176px;height:16px;line-height:16px;font-size:11.5px;color:#222;font-weight:700;left:787.31px;width:40px;text-align:center;letter-spacing:.15px;">27</div>
<div style="position:absolute;white-space:nowrap;top:188px;height:16px;line-height:16px;font-size:6.9px;color:#808080;left:787.31px;width:40px;text-align:center;">周日</div>
<div style="position:absolute;left:811.81px;top:175.60px;width:8.50px;height:8.50px;background:#e8474c;border-radius:50%;"></div>
<div style="position:absolute;white-space:nowrap;top:172px;height:16px;line-height:16px;font-size:6px;color:#fff;font-weight:700;left:810.06px;width:12px;text-align:center;transform:scale(.9);">休</div>
<div style="position:absolute;white-space:nowrap;top:176px;height:16px;line-height:16px;font-size:11.5px;color:#222;font-weight:700;left:846.50px;width:40px;text-align:center;letter-spacing:.15px;">28</div>
<div style="position:absolute;white-space:nowrap;top:188px;height:16px;line-height:16px;font-size:6.9px;color:#808080;left:846.50px;width:40px;text-align:center;">周一</div>
<div style="position:absolute;white-space:nowrap;top:176px;height:16px;line-height:16px;font-size:11.5px;color:#222;font-weight:700;left:905.69px;width:40px;text-align:center;letter-spacing:.15px;">29</div>
<div style="position:absolute;white-space:nowrap;top:188px;height:16px;line-height:16px;font-size:6.9px;color:#808080;left:905.69px;width:40px;text-align:center;">周二</div>
<div style="position:absolute;white-space:nowrap;top:176px;height:16px;line-height:16px;font-size:11.5px;color:#222;font-weight:700;left:964.88px;width:40px;text-align:center;letter-spacing:.15px;">30</div>
<div style="position:absolute;white-space:nowrap;top:188px;height:16px;line-height:16px;font-size:6.9px;color:#808080;left:964.88px;width:40px;text-align:center;">周三</div>
<div style="position:absolute;white-space:nowrap;top:176px;height:16px;line-height:16px;font-size:11.5px;color:#222;font-weight:700;left:1024.07px;width:40px;text-align:center;letter-spacing:.15px;">31</div>
<div style="position:absolute;white-space:nowrap;top:188px;height:16px;line-height:16px;font-size:6.9px;color:#808080;left:1024.07px;width:40px;text-align:center;">周四</div>
<svg style="left:1091.8px;top:185.7px" width="3.800" height="6.200" viewBox="0 0 7.600 12.400"><path d="M6.500 1L1.300 6.200l5.200 5.200" fill="none" stroke="#777" stroke-width="1.300"/></svg>
<svg style="left:1107.8px;top:185.7px" width="3.800" height="6.200" viewBox="0 0 7.600 12.400"><path d="M1.100 1l5.200 5.200-5.200 5.200" fill="none" stroke="#777" stroke-width="1.300"/></svg>
<div style="position:absolute;left:250.60px;top:207.00px;width:872.10px;height:431.00px;background:transparent;overflow:hidden;border-radius:0 0 2px 2px;"><div style="position:absolute;left:0.00px;top:0.00px;width:872.10px;height:0.70px;background:#efefef;"></div><div style="position:absolute;left:0.00px;top:50.65px;width:862.60px;height:0.70px;background:#f0f0f0;"></div><div style="position:absolute;left:128.20px;top:8.00px;width:724.00px;height:35.60px;background:#f4f4f4;border-radius:1.500px;"></div><svg style="left:467.50px;top:21.00px" width="9.600" height="9.600" viewBox="0 0 20 20"><circle cx="10" cy="10" r="10" fill="#1565eb"/><path d="M10 5v10M5 10h10" stroke="#fff" stroke-width="2.200"/></svg><div style="position:absolute;white-space:nowrap;top:19px;height:16px;line-height:16px;font-size:8.25px;color:#1565eb;left:480.90px;">添加菜品</div><div style="position:absolute;white-space:nowrap;top:6px;height:16px;line-height:16px;font-size:8px;color:#222;font-weight:700;left:-40.60px;width:200px;text-align:center;">早餐</div><div style="position:absolute;white-space:nowrap;top:18px;height:16px;line-height:16px;font-size:8.9px;color:#222;font-weight:700;left:-40.60px;width:200px;text-align:center;"><span style="font-size:7px;margin-right:.5px">¥</span>0.01</div><div style="position:absolute;white-space:nowrap;top:33px;height:16px;line-height:16px;font-size:8.25px;color:#666;left:-40.60px;width:200px;text-align:center;">小学 1-4年级餐标</div><div style="position:absolute;left:0.00px;top:100.95px;width:862.60px;height:0.70px;background:#f0f0f0;"></div><div style="position:absolute;left:128.20px;top:59.00px;width:724.00px;height:34.90px;background:#f4f4f4;border-radius:1.500px;"></div><svg style="left:467.50px;top:71.65px" width="9.600" height="9.600" viewBox="0 0 20 20"><circle cx="10" cy="10" r="10" fill="#1565eb"/><path d="M10 5v10M5 10h10" stroke="#fff" stroke-width="2.200"/></svg><div style="position:absolute;white-space:nowrap;top:69px;height:16px;line-height:16px;font-size:8.25px;color:#1565eb;left:480.90px;">添加菜品</div><div style="position:absolute;white-space:nowrap;top:57px;height:16px;line-height:16px;font-size:8px;color:#222;font-weight:700;left:-40.60px;width:200px;text-align:center;">早餐</div><div style="position:absolute;white-space:nowrap;top:69px;height:16px;line-height:16px;font-size:8.9px;color:#222;font-weight:700;left:-40.60px;width:200px;text-align:center;"><span style="font-size:7px;margin-right:.5px">¥</span>0.01</div><div style="position:absolute;white-space:nowrap;top:84px;height:16px;line-height:16px;font-size:8.25px;color:#666;left:-40.60px;width:200px;text-align:center;">小学 5-6 年级餐标</div><div style="position:absolute;left:0.00px;top:144.25px;width:862.60px;height:0.70px;background:#f0f0f0;"></div><div style="position:absolute;left:128.20px;top:109.30px;width:724.00px;height:27.90px;background:#f4f4f4;border-radius:1.500px;"></div><svg style="left:467.50px;top:118.45px" width="9.600" height="9.600" viewBox="0 0 20 20"><circle cx="10" cy="10" r="10" fill="#1565eb"/><path d="M10 5v10M5 10h10" stroke="#fff" stroke-width="2.200"/></svg><div style="position:absolute;white-space:nowrap;top:116px;height:16px;line-height:16px;font-size:8.25px;color:#1565eb;left:480.90px;">添加菜品</div><div style="position:absolute;white-space:nowrap;top:109px;height:16px;line-height:16px;font-size:8px;color:#222;font-weight:700;left:-40.60px;width:200px;text-align:center;">早餐</div><div style="position:absolute;white-space:nowrap;top:121px;height:16px;line-height:16px;font-size:8.9px;color:#222;font-weight:700;left:-40.60px;width:200px;text-align:center;"><span style="font-size:7px;margin-right:.5px">¥</span>6</div><div style="position:absolute;left:0.00px;top:187.55px;width:862.60px;height:0.70px;background:#f0f0f0;"></div><div style="position:absolute;left:128.20px;top:152.60px;width:724.00px;height:27.90px;background:#f4f4f4;border-radius:1.500px;"></div><svg style="left:467.50px;top:161.75px" width="9.600" height="9.600" viewBox="0 0 20 20"><circle cx="10" cy="10" r="10" fill="#1565eb"/><path d="M10 5v10M5 10h10" stroke="#fff" stroke-width="2.200"/></svg><div style="position:absolute;white-space:nowrap;top:160px;height:16px;line-height:16px;font-size:8.25px;color:#1565eb;left:480.90px;">添加菜品</div><div style="position:absolute;white-space:nowrap;top:152px;height:16px;line-height:16px;font-size:8px;color:#222;font-weight:700;left:-40.60px;width:200px;text-align:center;">早餐</div><div style="position:absolute;white-space:nowrap;top:165px;height:16px;line-height:16px;font-size:8.9px;color:#222;font-weight:700;left:-40.60px;width:200px;text-align:center;"><span style="font-size:7px;margin-right:.5px">¥</span>1</div><div style="position:absolute;left:0.00px;top:230.85px;width:862.60px;height:0.70px;background:#f0f0f0;"></div><div style="position:absolute;left:128.20px;top:195.90px;width:724.00px;height:27.90px;background:#f4f4f4;border-radius:1.500px;"></div><svg style="left:467.50px;top:205.05px" width="9.600" height="9.600" viewBox="0 0 20 20"><circle cx="10" cy="10" r="10" fill="#1565eb"/><path d="M10 5v10M5 10h10" stroke="#fff" stroke-width="2.200"/></svg><div style="position:absolute;white-space:nowrap;top:203px;height:16px;line-height:16px;font-size:8.25px;color:#1565eb;left:480.90px;">添加菜品</div><div style="position:absolute;white-space:nowrap;top:196px;height:16px;line-height:16px;font-size:8px;color:#222;font-weight:700;left:-40.60px;width:200px;text-align:center;">早餐</div><div style="position:absolute;white-space:nowrap;top:208px;height:16px;line-height:16px;font-size:8.9px;color:#222;font-weight:700;left:-40.60px;width:200px;text-align:center;"><span style="font-size:7px;margin-right:.5px">¥</span>0.01</div><div style="position:absolute;left:0.00px;top:274.25px;width:862.60px;height:0.70px;background:#f0f0f0;"></div><div style="position:absolute;left:128.20px;top:239.20px;width:724.00px;height:28.00px;background:#f4f4f4;border-radius:1.500px;"></div><svg style="left:467.50px;top:248.40px" width="9.600" height="9.600" viewBox="0 0 20 20"><circle cx="10" cy="10" r="10" fill="#1565eb"/><path d="M10 5v10M5 10h10" stroke="#fff" stroke-width="2.200"/></svg><div style="position:absolute;white-space:nowrap;top:246px;height:16px;line-height:16px;font-size:8.25px;color:#1565eb;left:480.90px;">添加菜品</div><div style="position:absolute;white-space:nowrap;top:239px;height:16px;line-height:16px;font-size:8px;color:#222;font-weight:700;left:-40.60px;width:200px;text-align:center;">早餐</div><div style="position:absolute;white-space:nowrap;top:251px;height:16px;line-height:16px;font-size:8.9px;color:#222;font-weight:700;left:-40.60px;width:200px;text-align:center;"><span style="font-size:7px;margin-right:.5px">¥</span>0.05</div><div style="position:absolute;left:0.00px;top:317.65px;width:862.60px;height:0.70px;background:#f0f0f0;"></div><div style="position:absolute;left:128.20px;top:282.60px;width:724.00px;height:28.00px;background:#f4f4f4;border-radius:1.500px;"></div><svg style="left:467.50px;top:291.80px" width="9.600" height="9.600" viewBox="0 0 20 20"><circle cx="10" cy="10" r="10" fill="#1565eb"/><path d="M10 5v10M5 10h10" stroke="#fff" stroke-width="2.200"/></svg><div style="position:absolute;white-space:nowrap;top:290px;height:16px;line-height:16px;font-size:8.25px;color:#1565eb;left:480.90px;">添加菜品</div><div style="position:absolute;white-space:nowrap;top:282px;height:16px;line-height:16px;font-size:8px;color:#222;font-weight:700;left:-40.60px;width:200px;text-align:center;">早餐</div><div style="position:absolute;white-space:nowrap;top:295px;height:16px;line-height:16px;font-size:8.9px;color:#222;font-weight:700;left:-40.60px;width:200px;text-align:center;"><span style="font-size:7px;margin-right:.5px">¥</span>10</div><div style="position:absolute;left:0.00px;top:367.85px;width:862.60px;height:0.70px;background:#f0f0f0;"></div><div style="position:absolute;left:128.20px;top:326.00px;width:724.00px;height:34.80px;background:#f4f4f4;border-radius:1.500px;"></div><svg style="left:467.50px;top:338.60px" width="9.600" height="9.600" viewBox="0 0 20 20"><circle cx="10" cy="10" r="10" fill="#1565eb"/><path d="M10 5v10M5 10h10" stroke="#fff" stroke-width="2.200"/></svg><div style="position:absolute;white-space:nowrap;top:336px;height:16px;line-height:16px;font-size:8.25px;color:#1565eb;left:480.90px;">添加菜品</div><div style="position:absolute;white-space:nowrap;top:324px;height:16px;line-height:16px;font-size:8px;color:#222;font-weight:700;left:-40.60px;width:200px;text-align:center;">早餐</div><div style="position:absolute;white-space:nowrap;top:336px;height:16px;line-height:16px;font-size:8.9px;color:#222;font-weight:700;left:-40.60px;width:200px;text-align:center;"><span style="font-size:7px;margin-right:.5px">¥</span>300</div><div style="position:absolute;white-space:nowrap;top:351px;height:16px;line-height:16px;font-size:8.25px;color:#666;left:-40.60px;width:200px;text-align:center;">都给我吃好点</div><div style="position:absolute;left:0.00px;top:410.95px;width:862.60px;height:0.70px;background:#f0f0f0;"></div><div style="position:absolute;left:128.20px;top:376.20px;width:724.00px;height:27.70px;background:#f4f4f4;border-radius:1.500px;"></div><svg style="left:467.50px;top:385.25px" width="9.600" height="9.600" viewBox="0 0 20 20"><circle cx="10" cy="10" r="10" fill="#1565eb"/><path d="M10 5v10M5 10h10" stroke="#fff" stroke-width="2.200"/></svg><div style="position:absolute;white-space:nowrap;top:383px;height:16px;line-height:16px;font-size:8.25px;color:#1565eb;left:480.90px;">添加菜品</div><div style="position:absolute;white-space:nowrap;top:376px;height:16px;line-height:16px;font-size:8px;color:#222;font-weight:700;left:-40.60px;width:200px;text-align:center;">午餐</div><div style="position:absolute;white-space:nowrap;top:388px;height:16px;line-height:16px;font-size:8.9px;color:#222;font-weight:700;left:-40.60px;width:200px;text-align:center;"><span style="font-size:7px;margin-right:.5px">¥</span>0.04</div><div style="position:absolute;left:0.00px;top:454.25px;width:862.60px;height:0.70px;background:#f0f0f0;"></div><div style="position:absolute;left:128.20px;top:419.30px;width:724.00px;height:27.90px;background:#f4f4f4;border-radius:1.500px;"></div><svg style="left:467.50px;top:428.45px" width="9.600" height="9.600" viewBox="0 0 20 20"><circle cx="10" cy="10" r="10" fill="#1565eb"/><path d="M10 5v10M5 10h10" stroke="#fff" stroke-width="2.200"/></svg><div style="position:absolute;white-space:nowrap;top:426px;height:16px;line-height:16px;font-size:8.25px;color:#1565eb;left:480.90px;">添加菜品</div><div style="position:absolute;white-space:nowrap;top:419px;height:16px;line-height:16px;font-size:8px;color:#222;font-weight:700;left:-40.60px;width:200px;text-align:center;">午餐</div><div style="position:absolute;white-space:nowrap;top:431px;height:16px;line-height:16px;font-size:8.9px;color:#222;font-weight:700;left:-40.60px;width:200px;text-align:center;"><span style="font-size:7px;margin-right:.5px">¥</span>15</div><div style="position:absolute;left:118.40px;top:0.00px;width:0.70px;height:493.00px;background:#f2f2f2;"></div><div style="position:absolute;left:862.60px;top:0.00px;width:9.50px;height:431.00px;background:#f1f1f1;"></div><div style="position:absolute;left:862.60px;top:11.00px;width:9.50px;height:255.50px;background:#c1c1c1;"></div><svg style="left:864.6px;top:3.8000000000000114px" width="5.800" height="3.700" viewBox="0 0 11 7"><path d="M1 6l4.500-4.500L10 6" fill="none" stroke="#444" stroke-width="2.500"/></svg><svg style="left:864.6px;top:424.29999999999995px" width="5.800" height="3.700" viewBox="0 0 11 7"><path d="M1 1l4.500 4.500L10 1" fill="none" stroke="#444" stroke-width="2.500"/></svg></div>
<div style="position:absolute;left:1104.30px;top:443.30px;width:27.70px;height:27.70px;background:#dbe7fb;border-radius:3px 0 0 3px;"></div>
<svg style="left:1113.9px;top:445.6px" width="10.400" height="11.400" viewBox="0 0 18 20" fill="none" stroke="#1565eb" stroke-width="1.600" stroke-linejoin="round"><path d="M9 2l7 3.800-7 3.800-7-3.800z"/><path d="M2 9.800l7 3.800 7-3.800"/><path d="M2 13.800l7 3.800 7-3.800"/></svg>
<div style="position:absolute;white-space:nowrap;top:457px;height:16px;line-height:16px;font-size:6.8px;color:#1565eb;left:1104.20px;width:30px;text-align:center;">任务</div>
<div style="position:absolute;left:1114.20px;top:527.60px;width:17.80px;height:60.40px;background:#1565eb;border-radius:2.500px 0 0 2.500px;"></div>
<svg style="left:1119.1px;top:534px" width="8.800" height="8.800" viewBox="0 0 17 17"><path d="M8.500 1.500a7 7 0 1 1-3.600 13L1.800 15.300l.9-3A7 7 0 0 1 8.500 1.500z" fill="none" stroke="#fff" stroke-width="1.400" stroke-linejoin="round"/><circle cx="5.600" cy="8.500" r=".9" fill="#fff"/><circle cx="8.500" cy="8.500" r=".9" fill="#fff"/><circle cx="11.400" cy="8.500" r=".9" fill="#fff"/></svg>
<div style="position:absolute;white-space:nowrap;top:544px;height:16px;line-height:16px;font-size:6.8px;color:#fff;font-weight:700;left:1113.60px;width:20px;text-align:center;">联</div>
<div style="position:absolute;white-space:nowrap;top:554px;height:16px;line-height:16px;font-size:6.8px;color:#fff;font-weight:700;left:1113.60px;width:20px;text-align:center;">系</div>
<div style="position:absolute;white-space:nowrap;top:564px;height:16px;line-height:16px;font-size:6.8px;color:#fff;font-weight:700;left:1113.60px;width:20px;text-align:center;">客</div>
<div style="position:absolute;white-space:nowrap;top:573px;height:16px;line-height:16px;font-size:6.8px;color:#fff;font-weight:700;left:1113.60px;width:20px;text-align:center;">服</div>
</div></body></html>
